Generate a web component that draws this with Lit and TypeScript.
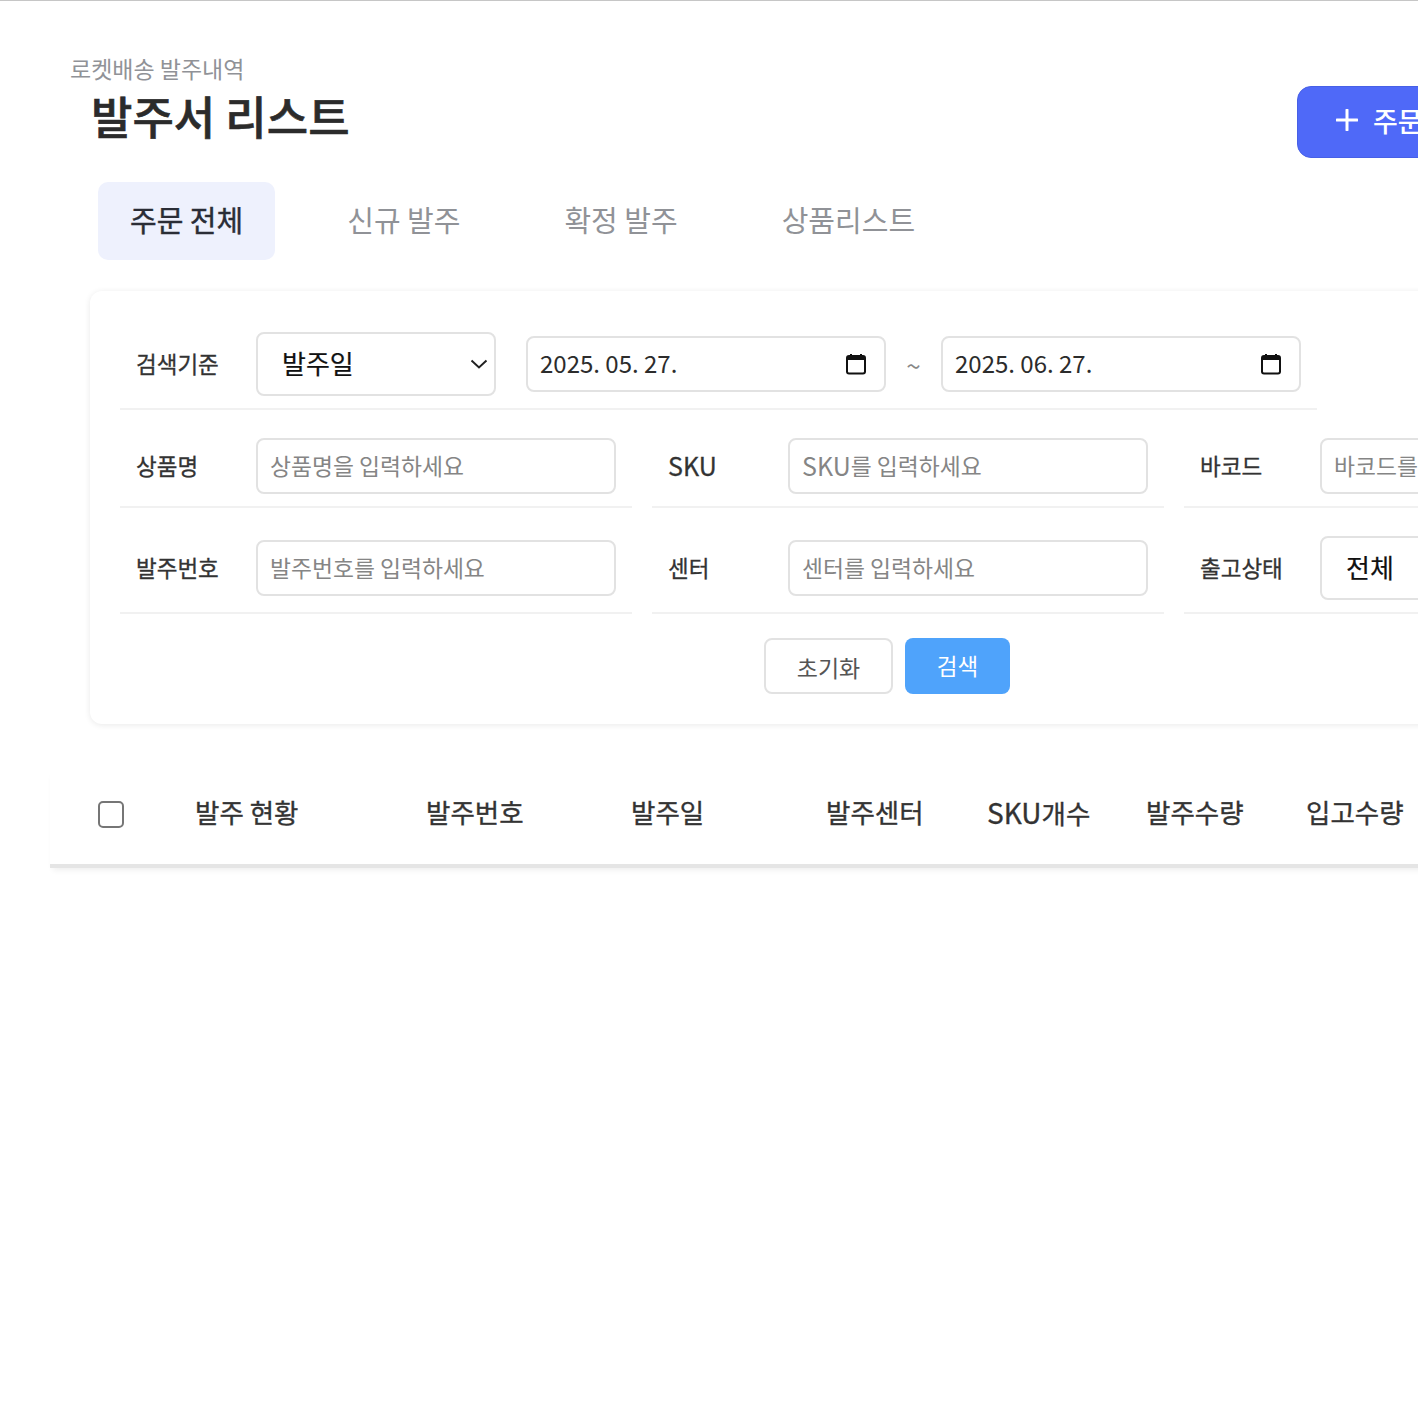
import { LitElement, html, css } from 'lit';
import { customElement } from 'lit/decorators.js';

const calendar = html`<svg class="cal" viewBox="0 0 20 22" width="20" height="22">
  <path d="M5 1v3M15 1v3" stroke="#111" stroke-width="2" fill="none" />
  <rect x="1" y="3" width="18" height="17.5" rx="2" fill="none" stroke="#111" stroke-width="2" />
  <rect x="1" y="3" width="18" height="4" fill="#111" />
</svg>`;

const chevron = html`<svg class="chev" viewBox="0 0 18 10" width="18" height="10">
  <path d="M1.5 1.5 9 8.5l7.5-7" stroke="#222" stroke-width="2" fill="none" />
</svg>`;

@customElement('app-root')
export class AppRoot extends LitElement {
  static styles = css`
    :host {
      display: block;
      width: 1418px;
      height: 1418px;
      overflow: hidden;
      background: #fff;
      border-top: 1px solid #c6c6c6;
      box-sizing: border-box;
      font-family: 'Noto Sans CJK KR', 'Noto Sans', sans-serif;
      color: #2b2b2b;
    }
    .head {
      display: grid;
      grid-template-columns: 1227px 260px;
      padding: 51px 0 0 70px;
      height: 181px;
      box-sizing: border-box;
    }
    .crumb {
      font-size: 23px;
      line-height: 32px;
      color: #909297;
    }
    h1 {
      margin: 2px 0 0 21px;
      font-size: 45px;
      line-height: 60px;
      font-weight: 500;
      color: #2b2b2b;
      -webkit-text-stroke: 0.6px #2b2b2b;
    }
    .add {
      display: flex;
      align-items: center;
      gap: 15px;
      height: 72px;
      margin-top: 34px;
      padding: 0 0 4px 38px;
      box-sizing: border-box;
      border: 1px solid #4760e6;
      border-radius: 14px;
      background: #4f69f8;
      color: #fff;
      font-size: 27px;
      font-weight: 500;
      white-space: nowrap;
    }
    .tabs {
      display: flex;
      gap: 40px;
      margin-left: 98px;
      height: 78px;
    }
    .tab {
      display: flex;
      align-items: center;
      padding: 0 32px 4px;
      font-size: 29px;
      color: #909297;
      border-radius: 10px;
    }
    .tab.on {
      background: #eef1fd;
      color: #2a2d36;
      -webkit-text-stroke: 0.4px #2a2d36;
    }
    .card {
      width: 1700px;
      margin: 31px 0 0 90px;
      padding: 41px 0 30px 30px;
      box-sizing: border-box;
      border-radius: 12px;
      background: #fff;
      box-shadow: 0 1px 6px rgba(0, 0, 0, 0.09);
    }
    .row {
      display: flex;
      align-items: center;
      padding-bottom: 12px;
      border-bottom: 2px solid #f1f1f1;
    }
    .first {
      width: 1197px;
      margin-bottom: 28px;
    }
    .grid {
      display: grid;
      grid-template-columns: repeat(3, 512px);
      column-gap: 20px;
      row-gap: 28px;
    }
    .label {
      flex: 0 0 136px;
      padding: 0 0 2px 16px;
      box-sizing: border-box;
      font-size: 22.5px;
      color: #333;
      -webkit-text-stroke: 0.3px #333;
      white-space: nowrap;
    }
    .label .sku {
      font-size: 25px;
    }
    .box {
      display: flex;
      align-items: center;
      box-sizing: border-box;
      height: 56px;
      border: 2px solid #e2e2e2;
      border-radius: 8px;
      background: #fff;
      white-space: nowrap;
      overflow: hidden;
    }
    .input {
      width: 360px;
      padding: 0 0 2px 12px;
      font-size: 22.8px;
      color: #858585;
    }
    .input .sku {
      font-size: 25px;
    }
    .select {
      justify-content: space-between;
      height: 64px;
      padding: 0 6px 0 24px;
      font-size: 26px;
      color: #111;
      -webkit-text-stroke: 0.2px #111;
    }
    .select span {
      padding-bottom: 4px;
    }
    .select.wide {
      width: 240px;
    }
    .select.full {
      width: 360px;
    }
    .date {
      justify-content: space-between;
      width: 360px;
      margin-left: 30px;
      padding: 0 18px 0 12px;
      font-size: 24px;
      color: #2c2c2c;
    }
    .date span {
      padding-bottom: 3px;
    }
    .date.end {
      margin-left: 0;
    }
    .tilde {
      flex: 0 0 55px;
      text-align: center;
      font-size: 26px;
      color: #888;
    }
    .actions {
      display: flex;
      gap: 12px;
      margin: 24px 0 0 644px;
    }
    .btn {
      display: flex;
      align-items: center;
      justify-content: center;
      box-sizing: border-box;
      height: 56px;
      border-radius: 8px;
      font-size: 23px;
    }
    .reset {
      width: 129px;
      border: 2px solid #e2e2e2;
      color: #555;
      padding-top: 2px;
    }
    .search {
      width: 105px;
      background: #4fa3fb;
      color: #fff;
      padding-bottom: 2px;
      font-size: 22.5px;
    }
    .thead {
      display: grid;
      grid-template-columns: 145px 231px 205px 195px 161px 159px 160px 200px;
      align-items: center;
      width: 1500px;
      height: 100px;
      margin: 40px 0 0 50px;
      font-size: 26.5px;
      color: #333;
      -webkit-text-stroke: 0.35px #333;
      white-space: nowrap;
      box-shadow: 0 4px 0 #e5e5e5, 0 9px 6px -3px rgba(0, 0, 0, 0.07);
    }
    .thead > div {
      padding-bottom: 5px;
    }
    .thead .sku {
      font-size: 28px;
    }
    .thead .check {
      width: 26px;
      height: 27px;
      margin-left: 48px;
      padding: 0;
      box-sizing: border-box;
      border: 2px solid #767676;
      border-radius: 5px;
    }
  `;

  render() {
    return html`
      <div class="head">
        <div>
          <div class="crumb">로켓배송 발주내역</div>
          <h1>발주서 리스트</h1>
        </div>
        <div class="add">
          <svg viewBox="0 0 22 22" width="22" height="22">
            <path d="M11 1v20M1 11h20" stroke="#fff" stroke-width="3" stroke-linecap="round" fill="none" />
          </svg>
          <span>주문 등록</span>
        </div>
      </div>

      <div class="tabs">
        <div class="tab on">주문 전체</div>
        <div class="tab">신규 발주</div>
        <div class="tab">확정 발주</div>
        <div class="tab">상품리스트</div>
      </div>

      <div class="card">
        <div class="row first">
          <div class="label">검색기준</div>
          <div class="box select wide"><span>발주일</span>${chevron}</div>
          <div class="box date"><span>2025. 05. 27.</span>${calendar}</div>
          <div class="tilde">~</div>
          <div class="box date end"><span>2025. 06. 27.</span>${calendar}</div>
        </div>
        <div class="grid">
          <div class="row"><div class="label">상품명</div><div class="box input">상품명을 입력하세요</div></div>
          <div class="row"><div class="label"><span class="sku">SKU</span></div><div class="box input"><span class="sku">SKU</span>를 입력하세요</div></div>
          <div class="row"><div class="label">바코드</div><div class="box input">바코드를 입력하세요</div></div>
          <div class="row"><div class="label">발주번호</div><div class="box input">발주번호를 입력하세요</div></div>
          <div class="row"><div class="label">센터</div><div class="box input">센터를 입력하세요</div></div>
          <div class="row"><div class="label">출고상태</div><div class="box select full"><span>전체</span>${chevron}</div></div>
        </div>
        <div class="actions">
          <div class="btn reset">초기화</div>
          <div class="btn search">검색</div>
        </div>
      </div>

      <div class="thead">
        <div class="check"></div>
        <div>발주 현황</div>
        <div>발주번호</div>
        <div>발주일</div>
        <div>발주센터</div>
        <div><span class="sku">SKU</span>개수</div>
        <div>발주수량</div>
        <div>입고수량</div>
      </div>
    `;
  }
}
